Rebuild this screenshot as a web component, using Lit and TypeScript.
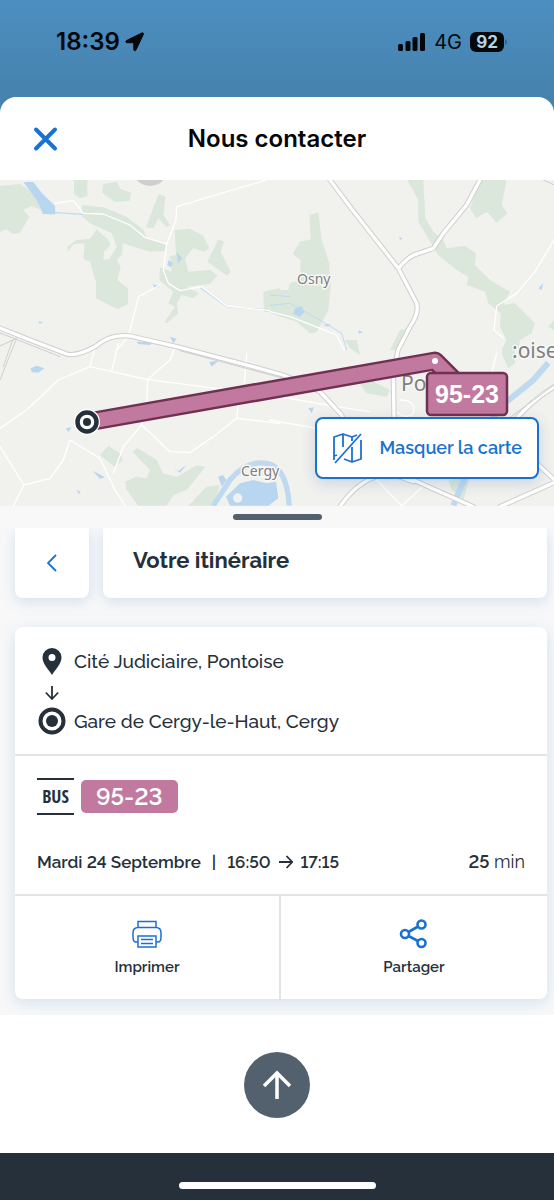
import { LitElement, html, css, svg } from "lit";
import { customElement } from "lit/decorators.js";

@customElement("status-bar")
class StatusBar extends LitElement {
  static styles = css`
    :host { display: block; }
    .bar {
      display: flex; justify-content: space-between; align-items: center;
      height: 84px; padding: 0 46px 0 56px; color: #05080b;
      font-family: Inter, "Liberation Sans", sans-serif;
    }
    .group { display: flex; align-items: center; }
    .left { gap: 5px; }
    .right { gap: 8px; }
    .time { font-size: 24px; line-height: 28px; font-weight: 600; }
    .net { font-size: 20px; line-height: 28px; }
    .battery { display: flex; align-items: center; gap: 1px; }
    .level {
      width: 34px; height: 20px; border-radius: 6px; background: #05080b; color: #b9d3e6;
      font-size: 17px; line-height: 20px; font-weight: 700; text-align: center;
    }
    svg { display: block; }
  `;
  render() {
    return html`
      <div class="bar">
        <div class="group left">
          <span class="time">18:39</span>
          <svg width="20" height="20" viewBox="0 0 20 20" aria-hidden="true">
            <path d="M16.800 1 1.500 8.600c-1.100.6-.8 2.100.5 2.100h6.800v6.800c0 1.400 1.600 1.700 2.200.4L18.300 2.500C18.800 1.300 17.900.500 16.800 1Z" fill="currentColor" stroke="currentColor"/>
          </svg>
        </div>
        <div class="group right">
          <svg width="28" height="18" viewBox="0 0 28 18" fill="currentColor" aria-hidden="true">
            <rect x="0" y="11" width="5" height="7" rx="1.500"/><rect x="7.500" y="8" width="5" height="10" rx="1.500"/>
            <rect x="14.500" y="4" width="5" height="14" rx="1.500"/><rect x="22" y="0" width="5" height="18" rx="1.500"/>
          </svg>
          <span class="net">4G</span>
          <span class="battery"><span class="level">92</span>
            <svg width="3" height="8" viewBox="0 0 3 8" aria-hidden="true"><path d="M0 1q4 3 0 6Z" fill="#2f6186"/></svg>
          </span>
        </div>
      </div>`;
  }
}

@customElement("route-map")
class RouteMap extends LitElement {
  static styles = css`
    :host { display: block; position: relative; }
    .map { display: block; width: 100%; height: 326px; background: #f1f1ee; }
    .wood { fill: #dae7da; }
    .water { fill: #b8d6f0; }
    .river { fill: none; stroke: #bfdaf0; }
    .casing, .lane, .minor, .rail { fill: none; stroke-linejoin: round; stroke-linecap: round; }
    .casing { stroke: #cfcfcf; stroke-width: 16; }
    .lane { stroke: #fff; stroke-width: 10; }
    .minor { stroke: #fff; stroke-width: 4; }
    .rail { stroke: #cfcfcf; stroke-width: 3; }
    .place { font-family: "Noto Sans", "Open Sans", sans-serif; fill: #7f7f84; stroke: #f7f7f5; stroke-width: 3px; paint-order: stroke; }
    .town { font-size: 14px; }
    .city { font-size: 21px; }
    .line { font: 700 25px "Liberation Sans", Arial, sans-serif; fill: #fff; text-anchor: middle; }
    .toggle {
      position: absolute; right: 15px; bottom: 27px;
      display: flex; align-items: center; gap: 16px; box-sizing: border-box;
      height: 62px; padding: 0 15px; border: 2px solid #1972d2; border-radius: 8px;
      background: #fff; color: #1972d2; box-shadow: 0 4px 14px rgba(60, 110, 160, .22);
      font: 600 18px/24px Raleway, Lato, "Open Sans", sans-serif;
    }
  `;

  private roads(paths: string[]) {
    return svg`${paths.map((d) => svg`<path class="casing" d=${d}/>`)}${paths.map((d) => svg`<path class="lane" d=${d}/>`)}`;
  }

  render() {
    return html`
      <svg class="map" viewBox="0 0 554 326" preserveAspectRatio="xMidYMid slice" role="img" aria-label="Carte">
        <g transform="scale(.33333)">
          <path class="wood" d="M0 18 60 12 110 45 125 100 160 106 95 78 70 90 88 110 60 158 40 162 18 148 0 156ZM222 0H262V48L240 55 222 42ZM310 12 350 5 362 28 394 38 388 62 345 66 306 38ZM476 42 496 50 490 105 510 135 500 142 475 115 460 145 438 142ZM246 76 310 82 380 110 430 150 440 172 495 188 498 212 450 215 400 200 368 190 366 224 350 240 362 260 352 300 384 325 384 372 352 387 288 355 288 305 270 245 250 238 254 190 220 192 205 215 202 200 230 180 270 176 290 148 325 180 332 194 312 215 310 240 328 238 350 200 335 160 270 130 246 108ZM524 150 570 146 610 168 628 205 612 215 580 205 555 235 565 275 630 270 652 286 630 312 560 320 596 340 580 355 545 345 530 370 535 400 500 430 494 425 525 380 505 370 520 335 478 300 480 262 515 275 510 228 528 225ZM655 178 672 185 662 215 692 275 682 287 622 245ZM790 336 840 324V396H792Z"/>
          <path class="water" d="M70 6H100L125 38 165 78 166 103 130 102 110 60ZM530 215 546 235 534 250ZM505 240 518 250 512 262 502 255ZM458 312 480 320 464 324ZM115 424 130 427 118 431ZM410 485 460 486 450 495 415 492ZM510 470 530 476 520 490Z"/>
          <path class="river" stroke-width="4" d="M165 98 250 103M600 322 680 380 790 388 840 400"/>
          <path fill="#cfcfcf" d="M410 0H490L480 10Q440 30 410 0Z"/>
          <path class="minor" d="M165 70 220 62 250 100 310 102 390 135 435 172 500 192 490 270 505 310 540 332 605 320 680 378 840 395M500 192 528 120 530 80 800 0M416 350 385 470 350 510M416 350 480 315"/>
        </g>
        <g transform="translate(270 0) scale(.33333)">
          <path class="wood" d="M412 0H460L466 115 490 155 520 180 530 205 585 198 618 220 615 255 660 300 720 335 700 375 735 370 795 430 785 460 750 480 745 510H695L710 480 690 440 692 400 655 370 645 335 590 315 595 290 560 270 505 225 445 125 445 60ZM630 0H710L695 75 712 100 680 128 650 95 618 115 600 85ZM118 106 145 96 155 180 178 250 182 320 175 390 140 455 120 460 80 425 0 400V330L55 330 60 310 90 300 92 240 68 222 90 185 122 178ZM360 510 390 450 410 448 385 510ZM835 440 852 420V450Z"/>
          <path class="water" d="M75 385 95 378 103 395 90 410 70 402ZM388 170 397 175 390 181ZM805 325 820 310 815 330ZM158 435 182 432 175 440ZM264 451 278 456 268 462Z"/>
          <path class="river" stroke-width="3" d="M0 376 60 370 150 420 215 460 230 510M0 345 60 350"/>
          <path class="minor" d="M0 395 60 410 150 445 200 465 222 510M852 180 795 275 740 340 680 378 672 450 700 475"/>
        </g>
        <g transform="translate(0 160) scale(.33333)">
          <path class="wood" d="M300 345 325 318 360 340 368 360 345 382ZM398 335 412 324 470 360 488 400 530 410 590 376 616 380 560 450 520 465 500 497H415L380 450 375 425 410 410 440 415 450 390ZM565 497 620 440 660 435 640 497Z"/>
          <path class="water" d="M92 85 110 77 133 85 115 98 95 96ZM628 66 655 62 635 80ZM690 497 678 470 720 430 760 420 800 430 828 425 835 475 805 497ZM655 410 668 405 680 420 665 440ZM520 385 535 393 560 374 540 398ZM278 392 315 412 300 416ZM230 450 242 455 236 462ZM198 265 215 262 205 276Z"/>
          <path class="river" stroke-width="16" d="M640 497 690 420Q740 360 800 370T868 497"/>
          <circle cx="713" cy="474" r="14" fill="#f1f1ee"/>
          <path class="minor" d="M0 265 80 210 175 120 270 80 440 118 700 152M285 20 270 80 350 98M525 20 510 60 443 118 440 190 425 255 370 320 340 400M425 255 510 335 570 338 640 290 710 235 715 195M710 235 840 250M355 10 335 95M740 40 733 130M0 320 72 435 40 497M72 435 150 415 190 360 210 300 300 355 345 450 375 497"/>
        </g>
        <g transform="translate(270 160) scale(.33333)">
          <path class="wood" d="M235 80 290 85 300 120 360 150 350 170 290 160ZM225 0H260L270 45 240 25ZM700 20 735 0V70L715 85 695 40ZM535 420 600 410 580 480 545 450Z"/>
          <path class="river" stroke-width="18" d="M835 68 790 120 710 185 620 290 590 400 550 497"/>
          <path class="water" d="M720 240 738 232 735 245 722 248ZM115 205 132 202 125 220Z"/>
          <path class="minor" d="M0 90 140 150M0 165 200 200 300 215M0 240 140 265M320 420 395 497 470 430M680 40 660 120 690 170M390 180Q440 180 430 220 410 240 380 215"/>
        </g>
        <g transform="scale(.33333)">
          ${this.roads([
            "M990 0 1050 80 1195 265 1250 370Q1258 400 1230 440L1194 510 1180 580 1184 850",
            "M1195 265Q1230 225 1250 222L1300 205 1330 160 1400 75 1440 0",
            "M-10 440 90 480 200 522Q230 530 285 500 330 460 390 468L530 500 733 553 850 585 960 635 1025 705 1060 820 1240 900 1420 980",
            "M1440 810 1530 740Q1590 660 1680 610M1600 840 1680 915M1500 980 1680 900M1020 980Q1080 890 1170 880L1240 905",
          ])}
          <path class="rail" d="M0 498 50 475 0 600M38 480 10 560M1520 720 1662 615M-10 455 180 530M540 512 850 595M1630 0 1670 18"/>
        </g>
        <text class="place town" x="297" y="104">Osny</text>
        <text class="place town" x="241" y="296">Cergy</text>
        <text class="place city" x="401" y="211">Po</text>
        <text class="place city" x="512" y="178">:oise</text>
        <path d="M88 242 435 181 461 207" fill="none" stroke="#70304f" stroke-width="19" stroke-linejoin="round"/>
        <path d="M88 242 435 181 461 207" fill="none" stroke="#c2799f" stroke-width="14" stroke-linejoin="round"/>
        <circle cx="435" cy="181" r="3" fill="#fff"/>
        <circle cx="87" cy="242" r="13" fill="#fff"/>
        <circle cx="87" cy="242" r="9.500" fill="#fff" stroke="#25303b" stroke-width="4.500"/>
        <circle cx="87" cy="242" r="4" fill="#25303b"/>
        <rect x="427" y="193" width="80" height="42" rx="4" fill="#c2799f" stroke="#70304f" stroke-width="2.500"/>
        <text class="line" x="467" y="223">95-23</text>
      </svg>
      <button class="toggle" type="button">
        <svg width="32" height="32" viewBox="0 0 32 32" fill="none" stroke="currentColor" stroke-width="1.800" stroke-linejoin="round" aria-hidden="true">
          <path d="M2 28V5L11 2 20 5 25 3M11 2V15M20 5V9M29 8V27L20 30 12 27M20 15V30M2 24 5 23M29 2 3 31"/>
        </svg>
        <span>Masquer la carte</span>
      </button>`;
  }
}

@customElement("trip-card")
class TripCard extends LitElement {
  static styles = css`
    :host { display: block; font-variant-numeric: lining-nums; }
    .card { border-radius: 8px; background: #fff; box-shadow: 0 4px 16px rgba(120, 165, 210, .28); color: #25303b; }
    .stops { display: grid; grid-template-columns: 28px 1fr; column-gap: 8px; row-gap: 2px; align-items: center; justify-items: center; padding: 20px 23px 19px; }
    .stop { justify-self: start; font-size: 19px; line-height: 28px; font-weight: 500; }
    .arrow, .arrival { grid-column: 1; }
    .trip { border-top: 2px solid #e3e4e6; padding: 22px 22px 18px; }
    .badges { display: flex; align-items: center; gap: 7px; }
    .bus {
      box-sizing: border-box; width: 37px; height: 37px; border: solid #25303b; border-width: 2px 0;
      font: 700 18px/33px "Open Sans Condensed", "DejaVu Sans Condensed", "Open Sans", sans-serif; text-align: center;
    }
    .line { padding: 0 15px; border-radius: 5px; background: #c2799f; color: #fff; font-size: 24px; line-height: 33px; font-weight: 600; }
    .times { display: flex; justify-content: space-between; align-items: center; margin-top: 33px; font-size: 17px; line-height: 28px; font-weight: 600; }
    .when { display: flex; align-items: center; gap: 8px; }
    .sep { margin: 0 3px; }
    .duration { font-size: 18px; font-weight: 400; }
    .duration strong { font-weight: 600; }
    .actions { display: grid; grid-template-columns: 1fr 1fr; border-top: 2px solid #e3e4e6; }
    .action {
      display: flex; flex-direction: column; align-items: center; gap: 7px; padding: 22px 0; border: 0; background: none;
      font: 600 15px/20px Raleway, Lato, sans-serif; color: #25303b;
    }
    .action:first-child { border-right: 2px solid #e3e4e6; }
    .icon { color: #1972d2; }
    svg { display: block; }
  `;
  render() {
    return html`
      <article class="card">
        <div class="stops">
          <svg width="20" height="27" viewBox="0 0 20 27" aria-hidden="true"><path fill="currentColor" fill-rule="evenodd" d="M10 0a9.500 9.500 0 0 0-9.500 9.500C.5 16 7 22 10 27c3-5 9.500-11 9.500-17.500A9.500 9.500 0 0 0 10 0Zm0 6a3.500 3.500 0 1 1 0 7 3.500 3.500 0 0 1 0-7Z"/></svg>
          <span class="stop">Cité Judiciaire, Pontoise</span>
          <svg class="arrow" width="14" height="28" viewBox="0 0 14 28" fill="none" stroke="currentColor" stroke-width="1.800" aria-hidden="true"><path d="M7 9V22M.8 15.500 7 22l6.200-6.500"/></svg>
          <svg class="arrival" width="28" height="28" viewBox="0 0 28 28" aria-hidden="true"><circle cx="14" cy="14" r="11.500" fill="none" stroke="currentColor" stroke-width="4"/><circle cx="14" cy="14" r="6" fill="currentColor"/></svg>
          <span class="stop">Gare de Cergy-le-Haut, Cergy</span>
        </div>
        <div class="trip">
          <div class="badges"><span class="bus">BUS</span><span class="line">95-23</span></div>
          <div class="times">
            <div class="when">
              <span>Mardi 24 Septembre</span><span class="sep">|</span><span>16:50</span>
              <svg width="14" height="14" viewBox="0 0 14 14" fill="none" stroke="currentColor" stroke-width="1.800" aria-hidden="true"><path d="M0 7H13M7.500 1 13.200 7 7.500 13"/></svg>
              <span>17:15</span>
            </div>
            <span class="duration"><strong>25</strong> min</span>
          </div>
        </div>
        <div class="actions">
          <button class="action" type="button">
            <svg class="icon" width="32" height="32" viewBox="0 0 32 32" fill="none" stroke="currentColor" stroke-width="1.500" aria-hidden="true">
              <path d="M7 9.500V3.500H25V9.500M7 24H5Q2 24 2 19V15Q2 9.500 7 9.500H25Q30 9.500 30 15V19Q30 24 27 24H25M7 18H25V29H7ZM10 21.500H22M10 25.500H22"/>
            </svg>
            <span>Imprimer</span>
          </button>
          <button class="action" type="button">
            <svg class="icon" width="32" height="32" viewBox="0 0 32 32" fill="none" stroke="currentColor" stroke-width="2.600" aria-hidden="true">
              <circle cx="7" cy="16" r="4"/><circle cx="23.500" cy="6.500" r="4"/><circle cx="23.500" cy="25" r="4"/><path d="M10.500 14 20 8.500M10.500 18 20 23"/>
            </svg>
            <span>Partager</span>
          </button>
        </div>
      </article>`;
  }
}

@customElement("app-root")
class AppRoot extends LitElement {
  static styles = css`
    :host { display: block; font-family: Raleway, Lato, "Open Sans", sans-serif; color: #25303b; }
    .screen { display: flex; flex-direction: column; min-height: 100vh; background: linear-gradient(#4d8ec1, #4583ad 97px); }
    .status { padding-bottom: 13px; }
    .sheet { display: flex; flex-direction: column; flex: 1; border-radius: 16px 16px 0 0; background: #fff; overflow: hidden; }
    .header { display: grid; grid-template-columns: 28px 1fr 28px; align-items: center; height: 83px; padding: 0 31px; }
    .title { margin: 0; font: 600 24px/32px Inter, "Liberation Sans", sans-serif; color: #050505; text-align: center; }
    .icon-button { display: grid; place-items: center; padding: 0; border: 0; background: none; color: #1972d2; }
    .content { background: #f8f8f9; }
    .grip { display: flex; justify-content: center; height: 14px; padding-top: 8px; }
    .handle { width: 89px; height: 6px; border-radius: 3px; background: #53616f; }
    .panel { padding: 0 7px 0 15px; overflow: hidden; }
    .heading { display: grid; grid-template-columns: 74px 1fr; gap: 14px; height: 70px; margin-bottom: 29px; }
    .tile { border-radius: 0 0 8px 8px; background: #fff; box-shadow: 0 4px 14px rgba(120, 165, 210, .28); }
    .heading-text { margin: 0; padding: 16px 30px; font-size: 22px; line-height: 32px; font-weight: 700; }
    .trip { padding-bottom: 16px; }
    .end { display: flex; justify-content: center; padding: 37px 0 35px; background: #fff; }
    .top { display: grid; place-items: center; width: 66px; height: 66px; padding: 0; border: 0; border-radius: 50%; background: #53616f; color: #fff; }
    .footer { display: flex; justify-content: center; align-items: flex-start; flex: 1; padding-top: 29px; background: #25303b; }
    .home { width: 197px; height: 7px; border-radius: 4px; background: #fff; }
  `;
  render() {
    return html`
      <div class="screen">
        <status-bar class="status"></status-bar>
        <main class="sheet">
          <header class="header">
            <button class="icon-button" type="button" aria-label="Fermer">
              <svg width="28" height="28" viewBox="0 0 28 28" stroke="currentColor" stroke-width="4" stroke-linecap="round" aria-hidden="true"><path d="M5 4.500 24 23.500M24 4.500 5 23.500"/></svg>
            </button>
            <h1 class="title">Nous contacter</h1>
          </header>
          <route-map></route-map>
          <div class="content">
            <div class="grip"><div class="handle"></div></div>
            <div class="panel">
              <div class="heading">
                <button class="icon-button tile" type="button" aria-label="Retour">
                  <svg width="10" height="18" viewBox="0 0 10 18" fill="none" stroke="currentColor" stroke-width="1.800" aria-hidden="true"><path d="M9 1 1 9l8 8"/></svg>
                </button>
                <h2 class="heading-text tile">Votre itinéraire</h2>
              </div>
              <trip-card class="trip"></trip-card>
            </div>
          </div>
          <div class="end">
            <button class="top" type="button" aria-label="Haut de page">
              <svg width="30" height="30" viewBox="0 0 30 30" fill="none" stroke="currentColor" stroke-width="3.500" aria-hidden="true"><path d="M15 29V3M2 16 15 3l13 13"/></svg>
            </button>
          </div>
          <footer class="footer"><div class="home"></div></footer>
        </main>
      </div>`;
  }
}
